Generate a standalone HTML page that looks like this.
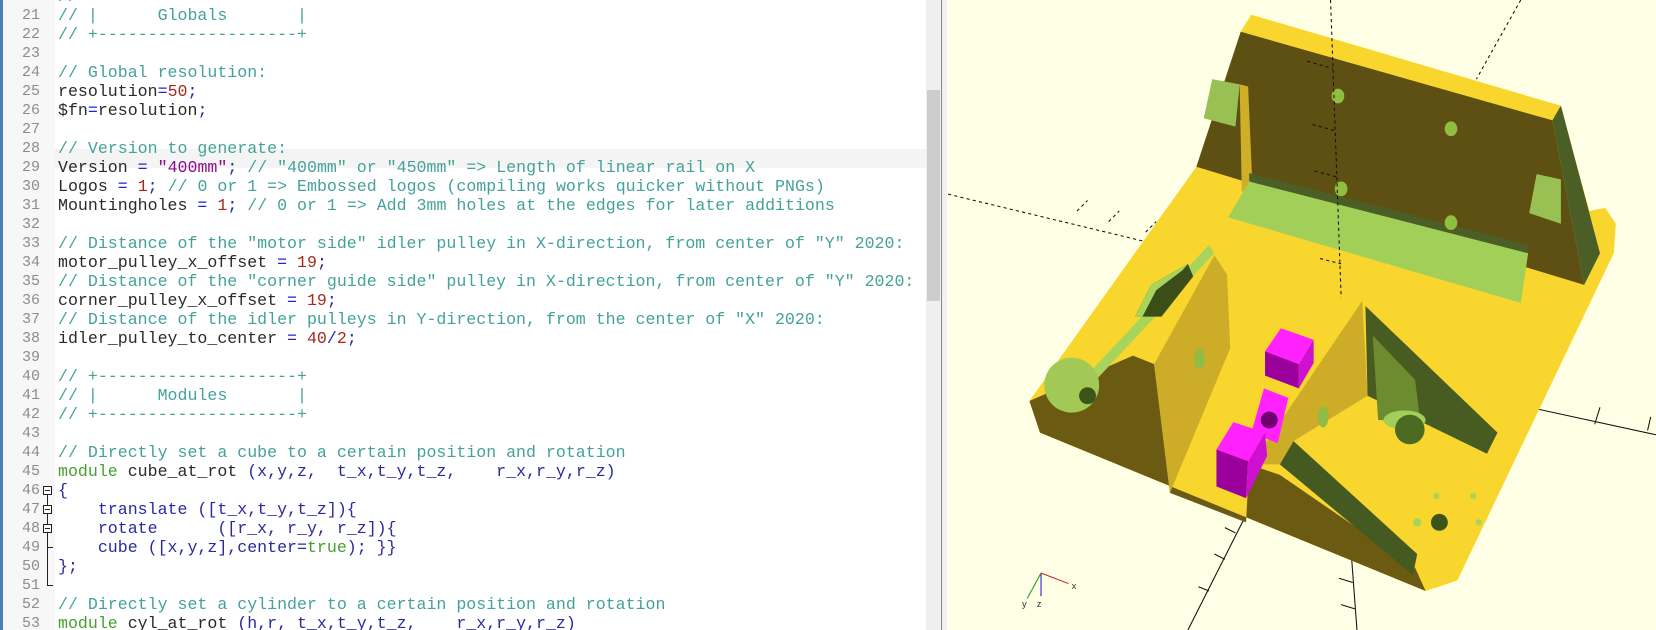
<!DOCTYPE html>
<html><head><meta charset="utf-8"><style>
html,body{margin:0;padding:0;width:1656px;height:630px;overflow:hidden;background:#fff;}
#ed{position:absolute;left:0;top:0;width:926px;height:630px;background:#fff;overflow:hidden;}
#gut{position:absolute;left:0;top:0;width:55px;height:630px;background:#f7f7f7;border-left:3px solid #4a7fb5;box-sizing:border-box;}
.ln{position:absolute;left:0;width:40px;text-align:right;font:15px "Liberation Mono",monospace;color:#8c8c8c;height:19px;line-height:19px;}
.cl{position:absolute;left:58px;white-space:pre;font:16.6px "Liberation Mono",monospace;color:#2a2a2a;height:19px;line-height:19px;}
.hl{position:absolute;left:55px;width:871px;height:19px;background:#f4f4f4;}
.c{color:#44a29a}.k{color:#46a030}.n{color:#a5281e}.s{color:#8e0a8e}.o{color:#2424c8}.f{color:#2a2a9e}
#sb{position:absolute;left:926px;top:0;width:15px;height:630px;background:#efefef;}
#th{position:absolute;left:927px;top:90px;width:13px;height:211px;background:#cdcdcd;}
#dv{position:absolute;left:941px;top:0;width:6px;height:630px;background:#f0f0f0;border-left:1px solid #8a8a8a;box-sizing:border-box;}
.fb{position:absolute;left:43px;width:9px;height:9px;border:1px solid #222;background:#fff;box-sizing:border-box;}
.fb:after{content:"";position:absolute;left:1px;top:3px;width:5px;height:1px;background:#222;}
svg{position:absolute;left:947px;top:0;}
</style></head><body>
<div id="ed">
<div id="gut"></div>
<div class="hl" style="top:149px"></div>
<div class="ln" style="top:-13px">20</div>
<div class="ln" style="top:6px">21</div>
<div class="ln" style="top:25px">22</div>
<div class="ln" style="top:44px">23</div>
<div class="ln" style="top:63px">24</div>
<div class="ln" style="top:82px">25</div>
<div class="ln" style="top:101px">26</div>
<div class="ln" style="top:120px">27</div>
<div class="ln" style="top:139px">28</div>
<div class="ln" style="top:158px">29</div>
<div class="ln" style="top:177px">30</div>
<div class="ln" style="top:196px">31</div>
<div class="ln" style="top:215px">32</div>
<div class="ln" style="top:234px">33</div>
<div class="ln" style="top:253px">34</div>
<div class="ln" style="top:272px">35</div>
<div class="ln" style="top:291px">36</div>
<div class="ln" style="top:310px">37</div>
<div class="ln" style="top:329px">38</div>
<div class="ln" style="top:348px">39</div>
<div class="ln" style="top:367px">40</div>
<div class="ln" style="top:386px">41</div>
<div class="ln" style="top:405px">42</div>
<div class="ln" style="top:424px">43</div>
<div class="ln" style="top:443px">44</div>
<div class="ln" style="top:462px">45</div>
<div class="ln" style="top:481px">46</div>
<div class="ln" style="top:500px">47</div>
<div class="ln" style="top:519px">48</div>
<div class="ln" style="top:538px">49</div>
<div class="ln" style="top:557px">50</div>
<div class="ln" style="top:576px">51</div>
<div class="ln" style="top:595px">52</div>
<div class="ln" style="top:614px">53</div>
<div style="position:absolute;left:47px;top:491px;width:1px;height:95px;background:#222"></div>
<div style="position:absolute;left:47px;top:585px;width:6px;height:1px;background:#222"></div>
<div style="position:absolute;left:47px;top:547px;width:6px;height:1px;background:#222"></div>
<div class="fb" style="top:486px"></div>
<div class="fb" style="top:505px"></div>
<div class="fb" style="top:524px"></div>

<div class="cl c" style="top:-13px">// +--------------------+</div>
<div class="cl c" style="top:6px">// |      Globals       |</div>
<div class="cl c" style="top:25px">// +--------------------+</div>
<div class="cl c" style="top:63px">// Global resolution:</div>
<div class="cl" style="top:82px">resolution<span class="o">=</span><span class="n">50</span><span class="f">;</span></div>
<div class="cl" style="top:101px">$fn<span class="o">=</span>resolution<span class="f">;</span></div>
<div class="cl c" style="top:139px">// Version to generate:</div>
<div class="cl" style="top:158px">Version <span class="o">=</span> <span class="s">"400mm"</span><span class="f">;</span> <span class="c">// "400mm" or "450mm" =&gt; Length of linear rail on X</span></div>
<div class="cl" style="top:177px">Logos <span class="o">=</span> <span class="n">1</span><span class="f">;</span> <span class="c">// 0 or 1 =&gt; Embossed logos (compiling works quicker without PNGs)</span></div>
<div class="cl" style="top:196px">Mountingholes <span class="o">=</span> <span class="n">1</span><span class="f">;</span> <span class="c">// 0 or 1 =&gt; Add 3mm holes at the edges for later additions</span></div>
<div class="cl c" style="top:234px">// Distance of the "motor side" idler pulley in X-direction, from center of "Y" 2020:</div>
<div class="cl" style="top:253px">motor_pulley_x_offset <span class="o">=</span> <span class="n">19</span><span class="f">;</span></div>
<div class="cl c" style="top:272px">// Distance of the "corner guide side" pulley in X-direction, from center of "Y" 2020:</div>
<div class="cl" style="top:291px">corner_pulley_x_offset <span class="o">=</span> <span class="n">19</span><span class="f">;</span></div>
<div class="cl c" style="top:310px">// Distance of the idler pulleys in Y-direction, from the center of "X" 2020:</div>
<div class="cl" style="top:329px">idler_pulley_to_center <span class="o">=</span> <span class="n">40</span><span class="o">/</span><span class="n">2</span><span class="f">;</span></div>
<div class="cl c" style="top:367px">// +--------------------+</div>
<div class="cl c" style="top:386px">// |      Modules       |</div>
<div class="cl c" style="top:405px">// +--------------------+</div>
<div class="cl c" style="top:443px">// Directly set a cube to a certain position and rotation</div>
<div class="cl" style="top:462px"><span class="k">module</span> cube_at_rot <span class="f">(x,y,z,  t_x,t_y,t_z,    r_x,r_y,r_z)</span></div>
<div class="cl f" style="top:481px">{</div>
<div class="cl f" style="top:500px">    translate ([t_x,t_y,t_z]){</div>
<div class="cl f" style="top:519px">    rotate      ([r_x, r_y, r_z]){</div>
<div class="cl f" style="top:538px">    cube ([x,y,z],center=<span class="k">true</span>); }}</div>
<div class="cl f" style="top:557px">};</div>
<div class="cl c" style="top:595px">// Directly set a cylinder to a certain position and rotation</div>
<div class="cl" style="top:614px"><span class="k">module</span> cyl_at_rot <span class="f">(h,r, t_x,t_y,t_z,    r_x,r_y,r_z)</span></div>
</div>
<div id="sb"></div><div id="th"></div><div id="dv"></div>

<svg width="709" height="630" viewBox="897 0 671 597" preserveAspectRatio="none">
<rect x="897" y="0" width="671" height="597" fill="#ffffe5"/>
<g stroke="#111" stroke-width="1" fill="none" stroke-dasharray="3,3">
<path d="M898 184 L1110 235"/><path d="M1440 0 L1398 75"/>
<path d="M1020 200 L1030 190 M1050 210 L1060 200 M1085 220 L1095 210"/>
</g>
<g stroke="#111" stroke-width="1" fill="none">
<path d="M1180 488 L1125 597"/><path d="M1160 530 L1150 525 M1145 560 L1135 556 M1170 505 L1160 500"/>
<path d="M1280 530 L1285 597"/><path d="M1268 548 L1281 552 M1270 573 L1283 577"/>
<path d="M1430 382 L1568 412"/><path d="M1455 390 L1460 375 M1510 402 L1515 386 M1560 408 L1563 395"/>
</g>
<polygon points="1185,14 1477,100 1505,200 1520,197 1530,212 1528,240 1380,550 1350,560 985,410 975,380 1133,158 1175,30" fill="#f9d62e"/>
<polygon points="1175,30 1470,114 1500,270 1133,158" fill="#5e5013"/>
<polygon points="1185,14 1477,100 1470,114 1175,30" fill="#f9d62e"/>
<polygon points="1470,114 1478,100 1515,240 1500,270" fill="#4a5e26"/>
<polygon points="1148,75 1174,80 1170,120 1140,112" fill="#98c052"/>
<polygon points="1174,80 1182,82 1186,175 1176,182" fill="#cfae28"/>
<polygon points="1183,164 1447,232 1447,240 1183,172" fill="#4a5e26"/>
<polygon points="1183,172 1447,240 1440,287 1163,206" fill="#a2cf58"/>
<polygon points="1455,165 1478,170 1478,212 1448,202" fill="#98c052"/>
<g fill="#8fbf40"><ellipse cx="1267" cy="91" rx="6" ry="7"/><ellipse cx="1374" cy="122" rx="6" ry="7"/><ellipse cx="1270" cy="179" rx="6" ry="7"/><ellipse cx="1374" cy="211" rx="6" ry="7"/></g>
<polygon points="975,380 1073,337 1093,345 1108,467 1180,495 1183,440 1212,450 1340,538 1350,560 985,410" fill="#6b5a12"/>
<polygon points="1093,345 1150,242 1162,260 1165,330 1108,467" fill="#cdac28"/>
<ellipse cx="1136" cy="340" rx="5" ry="10" fill="#90bc45"/>
<polygon points="1185,440 1290,285 1295,375 1225,418 1212,440" fill="#cdac28"/>
<ellipse cx="1253" cy="395" rx="5" ry="10" fill="#90bc45"/>
<polygon points="1212,440 1225,418 1342,525 1338,545" fill="#445a20"/>
<polygon points="1293,290 1418,410 1408,430 1295,375" fill="#485c22"/>
<polygon points="1300,318 1340,360 1345,400 1305,398" fill="#6d8c30"/>
<ellipse cx="1330" cy="398" rx="20" ry="9" fill="#a2cf58"/>
<circle cx="1335" cy="407" r="14" fill="#4c6a22"/>
<polygon points="1145,232 1030,355 1040,358 1150,240" fill="#a8d45c"/>
<polygon points="1075,300 1090,270 1125,250 1130,262 1100,300" fill="#3c4e18"/>
<polygon points="1075,300 1090,270 1125,250 1120,256 1095,275 1082,300" fill="#a8d45c"/>
<circle cx="1015" cy="365" r="26" fill="#a2c856"/>
<circle cx="1030" cy="375" r="8" fill="#3c5418"/>
<g fill="#a8d45c"><circle cx="1360" cy="470" r="3"/><circle cx="1395" cy="470" r="3"/><circle cx="1342" cy="495" r="4"/><circle cx="1400" cy="495" r="3"/></g>
<circle cx="1363" cy="495" r="8" fill="#3c5418"/>
<polygon points="1213,311 1244,322 1230,345 1198,333" fill="#ff22ff"/>
<polygon points="1198,333 1230,345 1230,368 1198,356" fill="#9c009c"/>
<polygon points="1244,322 1244,344 1230,368 1230,345" fill="#d010d0"/>
<polygon points="1197,368 1220,377 1210,420 1185,410" fill="#ff22ff"/>
<circle cx="1202" cy="398" r="8" fill="#700070"/>
<polygon points="1168,400 1198,410 1182,437 1152,426" fill="#ff22ff"/>
<polygon points="1152,426 1182,437 1180,472 1152,461" fill="#9c009c"/>
<polygon points="1198,410 1200,432 1180,472 1182,437" fill="#d010d0"/>
<g stroke="#111" stroke-width="1" fill="none" stroke-dasharray="3,3">
<path d="M1260 0 L1270 282"/>
<path d="M1238 58 L1262 65 M1243 118 L1265 124 M1245 162 L1267 168 M1250 245 L1270 250"/>
</g>
<line x1="986" y1="543" x2="1012" y2="553" stroke="#cc2020"/>
<line x1="986" y1="543" x2="986" y2="565" stroke="#2020cc"/>
<line x1="986" y1="543" x2="973" y2="567" stroke="#20a020"/>
<text x="1015" y="558" font-family="Liberation Sans,sans-serif" font-size="9" fill="#333">x</text>
<text x="968" y="575" font-family="Liberation Sans,sans-serif" font-size="9" fill="#333">y</text>
<text x="982" y="575" font-family="Liberation Sans,sans-serif" font-size="9" fill="#333">z</text>
</svg>
</body></html>
